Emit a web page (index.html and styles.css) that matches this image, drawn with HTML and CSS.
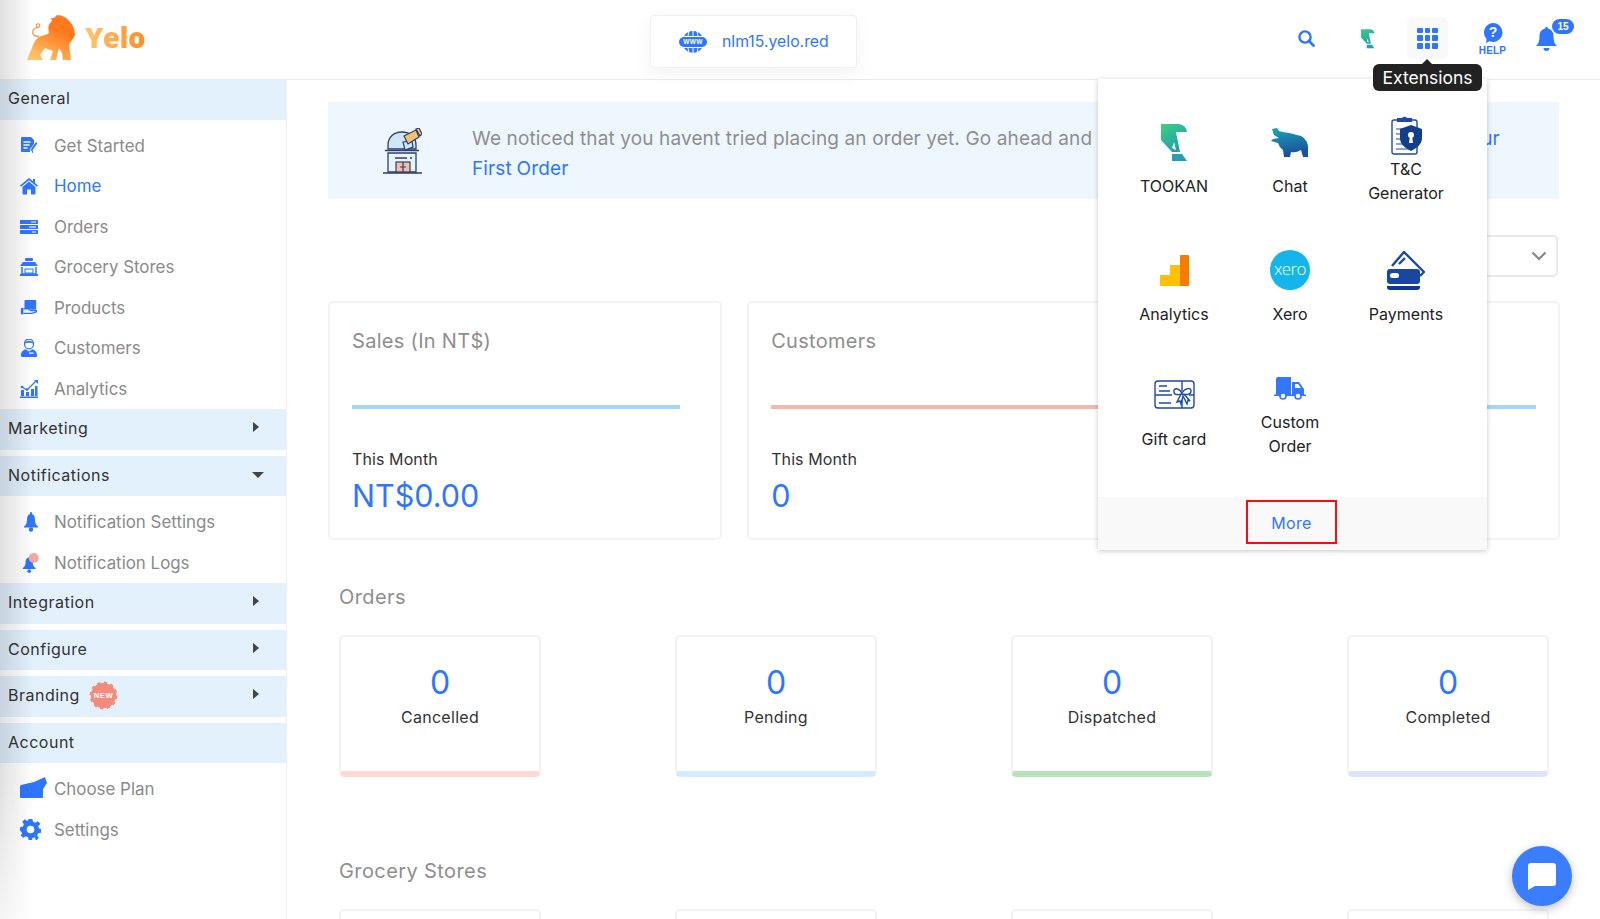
FILE: index.html
```html
<!DOCTYPE html>
<html lang="en">
<head>
<meta charset="utf-8">
<title>Yelo Dashboard</title>
<link rel="stylesheet" href="styles.css">
</head>
<body>
<div class="app">
  <header class="topbar">
    <a class="logo">
      <svg class="lion" viewBox="0 0 48 45" width="48" height="45">
        <defs><linearGradient id="lg" x1="0.7" y1="0" x2="0.2" y2="1"><stop offset="0.3" stop-color="#ff7a1f"/><stop offset="1" stop-color="#ffc66b"/></linearGradient></defs>
        <path fill="url(#lg)" d="M30 0C36 0 40 3 43 7C47 11 48 16 48 20C46 25 43 27 42 30L44 45L36 45L35 38L32 33L29 45L23 45L26 36L18 33L13 40L16 45L0 45C2 40 4 35 6 30C8 26 9 24 12 22C16 20 20 20 22 18C21 14 21 10 23 8L25 6L24 3L27 3Z"/>
        <path fill="none" stroke="#ff9a4a" stroke-width="1.300" d="M12 21C8 22 5 20 6 16C6 13 9 13 12 12"/>
        <circle cx="11" cy="10.500" r="1.800" fill="none" stroke="#ff8a3a" stroke-width="1.100"/>
      </svg>
      <span class="logo-text">Yelo</span>
    </a>
    <div class="url-pill">
      <svg viewBox="0 0 28 22" width="28" height="22">
        <path fill="#2f76ff" d="M14 0a11 11 0 0 0-9 5h18a11 11 0 0 0-9-5zM5 17a11 11 0 0 0 18 0z"/>
        <path stroke="#fff" stroke-width="1" d="M10 0l-1 5M14 0v5M18 0l1 5M9 17l1 5M14 17v5M19 17l-1 5"/>
        <rect x="0" y="6" width="28" height="10" rx="5" fill="#2f76ff"/>
        <text x="14" y="13.400" class="www">WWW</text>
      </svg>
      <span>nlm15.yelo.red</span>
    </div>
    <nav class="actions">
      <svg class="act" viewBox="0 0 17 17" width="17" height="17"><circle cx="7" cy="7" r="5.600" fill="none" stroke="#2f76ff" stroke-width="2.400"/><path d="M11 11l4.500 4.500" stroke="#2f76ff" stroke-width="2.800" stroke-linecap="round"/></svg>
      <svg class="act act-tookan" viewBox="0 0 27 38" width="14" height="21">
        <defs><linearGradient id="tk1" x1="0" y1="0" x2="0.6" y2="1"><stop offset="0" stop-color="#3fcf7f"/><stop offset="1" stop-color="#1f9fb0"/></linearGradient></defs>
        <path fill="url(#tk1)" d="M0 1H18Q25 2 26 9H15L19 29L11 29L0 17Z"/><path fill="#fff" d="M13 19l2 8-4-2z"/><path fill="#2a9db0" d="M11 31H21L26 38H11Z"/>
      </svg>
      <div class="ext-btn">
        <span class="grid-icon"><i></i><i></i><i></i><i></i><i></i><i></i><i></i><i></i><i></i></span>
        <div class="tooltip">Extensions</div>
        <div class="menu">
          <div class="menu-grid">
            <div class="ext">
              <span class="ext-icon"><svg viewBox="0 0 27 38" width="27" height="38">
                <defs><linearGradient id="tk2" x1="0" y1="0" x2="0.6" y2="1"><stop offset="0" stop-color="#3fcf7f"/><stop offset="1" stop-color="#1f9fb0"/></linearGradient></defs>
                <path fill="url(#tk2)" d="M0 1H18Q25 2 26 9H15L19 29L11 29L0 17Z"/><path fill="#fff" d="M13 19l2 8-4-2z"/><path fill="#2a9db0" d="M11 31H21L26 38H11Z"/></svg></span>
              <span>TOOKAN</span>
            </div>
            <div class="ext">
              <span class="ext-icon"><svg viewBox="0 0 38 31" width="38" height="31">
                <defs><linearGradient id="hp" x1="0" y1="0" x2="0.2" y2="1"><stop offset="0" stop-color="#1aa5b8"/><stop offset="1" stop-color="#1a4f9a"/></linearGradient></defs>
                <path fill="url(#hp)" d="M1 2L6 1L8 4L12 5Q20 6 26 8Q35 9 37 19L37 30H32L30 23Q25 26 20 25L19 30H13L12 23Q8 20 7 16L0 14L2 12L8 11L3 8Z"/></svg></span>
              <span>Chat</span>
            </div>
            <div class="ext ext-tall">
              <span class="ext-icon"><svg viewBox="0 0 31 40" width="31" height="40">
                <rect x="1" y="5" width="25" height="34" rx="2" fill="#fff" stroke="#1b4aa8" stroke-width="1.400"/>
                <path fill="#1b4aa8" d="M6 3h5a3 3 0 0 1 5 0h5v4H6z"/>
                <path stroke="#1b4aa8" stroke-width="1.200" d="M5 14h7M5 19h7M5 24h7M5 29h9M5 34h16"/>
                <path fill="#123f8c" d="M20 10l11 4v9c0 6-5 10-11 13c-6-3-11-7-11-13v-9z"/>
                <circle cx="20" cy="20" r="3" fill="#fff"/><path fill="#fff" d="M19 21h2l1 7h-4z"/></svg></span>
              <span>T&amp;C<br>Generator</span>
            </div>
            <div class="ext">
              <span class="ext-icon"><svg viewBox="0 0 29 31" width="29" height="31">
                <path fill="#ffc107" d="M1 20h9V10h10v21H1a1 1 0 0 1-1-1V21a1 1 0 0 1 1-1z"/>
                <path fill="#f57c00" d="M20 1a1 1 0 0 1 1-1h7a1 1 0 0 1 1 1v29a1 1 0 0 1-1 1h-8z"/></svg></span>
              <span>Analytics</span>
            </div>
            <div class="ext">
              <span class="ext-icon"><span class="xero">xero</span></span>
              <span>Xero</span>
            </div>
            <div class="ext">
              <span class="ext-icon"><svg viewBox="0 0 38 40" width="38" height="40">
                <path fill="none" stroke="#1a4a9e" stroke-width="2.400" stroke-linejoin="round" d="M5 16L17 2L37 22L33 26"/>
                <path stroke="#1a4a9e" stroke-width="2.400" d="M12 14l6-6"/>
                <rect x="0" y="19" width="33" height="15" rx="3" fill="#17479e"/>
                <rect x="3" y="23" width="9" height="5" rx="2.500" fill="#fff"/>
                <path fill="#0c35a0" d="M0 36h33v1a3 3 0 0 1-3 3H3a3 3 0 0 1-3-3z"/></svg></span>
              <span>Payments</span>
            </div>
            <div class="ext">
              <span class="ext-icon"><svg viewBox="0 0 41 30" width="41" height="30" fill="none" stroke="#1b4aa8" stroke-width="1.400">
                <rect x="1" y="1" width="39" height="27" rx="3"/>
                <path d="M5 6h8M5 11h11M1 15h17M5 23h12M28 1v10M28 20v8M35 15h5"/>
                <path d="M28 13C24 7 19 8 20 12C20 15 24 15 28 14C32 15 37 15 37 11C37 7 31 8 28 13Z"/>
                <path d="M27 14L23 22L26 21L27 24L29 16L33 24L34 20L36 21L30 14"/></svg></span>
              <span>Gift card</span>
            </div>
            <div class="ext ext-tall">
              <span class="ext-icon"><svg viewBox="0 0 32 23" width="32" height="23">
                <path fill="#3377ff" d="M2 2a2 2 0 0 1 2-2h13v18H2zM18 5h7l5 7v6H18z"/>
                <path fill="#fff" d="M21 7h3l3 4h-6z"/>
                <path fill="#3377ff" d="M0 17.500h32v1.500H0z"/>
                <circle cx="9" cy="19" r="3" fill="#fff" stroke="#3377ff" stroke-width="1.600"/>
                <circle cx="24" cy="19" r="3" fill="#fff" stroke="#3377ff" stroke-width="1.600"/></svg></span>
              <span>Custom<br>Order</span>
            </div>
          </div>
          <div class="menu-foot"><a class="more">More</a></div>
        </div>
      </div>
      <div class="act-help">
        <svg viewBox="0 0 20 20" width="20" height="20"><path fill="#2f76ff" d="M10 0a9.500 9.500 0 1 1-3.600 18.300L3 20l.6-4A9.500 9.500 0 0 1 10 0z"/><text x="10" y="14" class="q">?</text></svg>
        <span>HELP</span>
      </div>
      <div class="act-bell">
        <svg viewBox="0 0 21 24" width="21" height="24"><path fill="#2f76ff" d="M10.500 0c.8 0 1.300.6 1.300 1.400C15.500 2.200 17.500 5 17.500 9c0 5 1 8 3.500 10H0c2.500-2 3.500-5 3.500-10 0-4 2-6.800 5.700-7.600C9.200.6 9.700 0 10.500 0z"/><path fill="#2f76ff" d="M7.500 21h6a3 3 0 0 1-6 0z"/></svg>
        <span class="badge">15</span>
      </div>
    </nav>
  </header>

  <div class="body">
    <aside class="sidebar">
      <div class="sec">General</div>
      <ul class="items">
        <li><svg class="ic" viewBox="0 0 18 18"><path fill="#2f76ff" d="M2 0h9l3 3v4l-4 5v3H2a1 1 0 0 1-1-1V1a1 1 0 0 1 1-1z M2 16h10a1 1 0 0 0 1-1v-2l-1 1v2z"/><path stroke="#fff" stroke-width="1.300" d="M3.500 5h7M3.500 8h6M3.500 11h4"/><path fill="#2f76ff" d="M11 12l5-7 1.500 1.200-5 7-2 1z"/></svg>Get Started</li>
        <li class="active"><svg class="ic" viewBox="0 0 18 18"><path fill="#2f76ff" d="M9 1L0 8.500l1 1.300L9 3.200l8 6.600 1-1.300-3-2.500V2h-2v2.200z"/><path fill="#2f76ff" d="M9 4.500L2.500 10v6.500a1 1 0 0 0 1 1H7v-5h4v5h3.500a1 1 0 0 0 1-1V10z"/></svg>Home</li>
        <li><svg class="ic" viewBox="0 0 18 18"><rect y="2" width="18" height="4" rx=".6" fill="#2f76ff"/><rect y="7" width="18" height="4" rx=".6" fill="#2f76ff"/><rect y="12" width="18" height="4" rx=".6" fill="#2f76ff"/><path stroke="#fff" stroke-width="1" d="M11 4h5M9 9h7M12 14h4"/></svg>Orders</li>
        <li><svg class="ic" viewBox="0 0 18 18"><rect x="5" y="0" width="8" height="3" rx="1" fill="#2f76ff"/><path fill="#2f76ff" d="M3 4h12l3 4H0z"/><path fill="none" stroke="#2f76ff" stroke-width="1.500" d="M2 9v7h14V9"/><rect x="5" y="11" width="8" height="4" fill="none" stroke="#2f76ff"/><rect y="16" width="18" height="2" fill="#2f76ff"/></svg>Grocery Stores</li>
        <li><svg class="ic" viewBox="0 0 20 18"><rect x="5" y="0" width="13" height="11" rx="1" fill="#2f76ff"/><rect x="1" y="9" width="3" height="7" fill="#2f76ff"/><path fill="#fff" d="M4 10h6l4 2h5v1l-5 2H4z"/><path fill="none" stroke="#2f76ff" stroke-width="1.300" d="M4 10h5l3 2h7M4 15h9l6-2"/></svg>Products</li>
        <li><svg class="ic" viewBox="0 0 18 20"><ellipse cx="9" cy="5.500" rx="5" ry="5.500" fill="#fff" stroke="#2f76ff" stroke-width="1.400"/><path fill="#2f76ff" d="M4 5c2-4 8-4 10 0-3-1-7-1-10 0zM0 19c0-5 3-7 5.500-7.500L9 14l3.500-2.500C15 12 18 14 18 19c0 .6-.5 1-1 1H1c-.5 0-1-.4-1-1z"/><rect x="9" y="15" width="5" height="1.400" fill="#fff"/></svg>Customers</li>
        <li><svg class="ic" viewBox="0 0 18 18"><path fill="#2f76ff" d="M0 16.500h18V18H0zM1 10h3v6H1zM6 12h3v4H6zM11 9h3v7h-3zM15 6h2.500v10H15z"/><path stroke="#2f76ff" stroke-width="1.200" fill="none" d="M2 7l5 3 5-5 4-4"/><circle cx="2" cy="7" r="1.300" fill="#2f76ff"/><circle cx="7" cy="9.500" r="1.300" fill="#2f76ff"/><path fill="#2f76ff" d="M14 0h4v4z"/></svg>Analytics</li>
      </ul>
      <div class="sec sec-arrow">Marketing<i class="tri-r"></i></div>
      <div class="sec sec-arrow">Notifications<i class="tri-d"></i></div>
      <ul class="items">
        <li><svg class="ic ic-bell" viewBox="0 0 14 20"><circle cx="7" cy="1.200" r="1.100" fill="#2f76ff"/><path fill="#2f76ff" d="M7 2c3 0 4 2.500 4 6 0 3 1 5 3 6.500v1H0v-1C2 13 3 11 3 8c0-3.500 1-6 4-6z"/><circle cx="7" cy="17.500" r="2.200" fill="#2f76ff"/></svg>Notification Settings</li>
        <li><svg class="ic ic-bell" viewBox="0 0 18 22"><path fill="#2f76ff" d="M7 5c3 0 4 2.500 4 6 0 2 1 4 3 5.500v1H0v-1C2 15 3 13 3 11c0-3.500 1-6 4-6z"/><circle cx="7" cy="20" r="2" fill="#2f76ff"/><circle cx="12" cy="5.500" r="5.500" fill="#f4a99c"/></svg>Notification Logs</li>
      </ul>
      <div class="sec sec-arrow">Integration<i class="tri-r"></i></div>
      <div class="sec sec-arrow">Configure<i class="tri-r"></i></div>
      <div class="sec sec-arrow">Branding
        <svg class="new" viewBox="0 0 30 30" width="29" height="29"><circle cx="15" cy="15" r="13" fill="#f28b7c"/><circle cx="15" cy="15" r="13.500" fill="none" stroke="#f28b7c" stroke-width="1.800" stroke-dasharray="3.530 3.530"/><text x="15" y="18" class="new-t">NEW</text></svg>
        <i class="tri-r"></i></div>
      <div class="sec">Account</div>
      <ul class="items">
        <li><svg class="ic ic-plan" viewBox="0 0 27 21"><path fill="#2f76ff" d="M1 8l13-3L25 0l2 6-4 6v9H1a1 1 0 0 1-1-1V9z"/></svg>Choose Plan</li>
        <li><svg class="ic ic-gear" viewBox="0 0 22 22"><path fill="#2f76ff" fill-rule="evenodd" d="M9 0h4l.6 3 2.400 1 2.600-1.700 2.800 2.800L19 7.700l1 2.300 2 .6v3.800l-3 .6-1 2.400 1.700 2.600-2.800 2.800L15.300 19l-2.300 1-.6 2H9l-.6-3-2.400-1-2.600 1.700-2.800-2.800L2.300 15.300l-1-2.300L0 12.400V8.600l3-.6 1-2.400L2.300 3 5.100.3 7.700 2l.7-.3zM11 7a4 4 0 1 0 0 8 4 4 0 0 0 0-8z"/></svg>Settings</li>
      </ul>
    </aside>

    <main class="main">
      <section class="banner">
        <svg class="scope" viewBox="0 0 39 46" width="39" height="46">
          <path fill="#cfe6f8" stroke="#2c3e6b" stroke-width="1.300" d="M5 21V17C5 9 11 4 19 4c8 0 14 5 14 13v4z"/>
          <path fill="#e8f3fb" stroke="#2c3e6b" stroke-width="1.300" d="M5 25h28v19H5z"/>
          <path stroke="#2c3e6b" stroke-width="1.300" d="M2 22.500h34M0 45h39M12 30h12M27 30h2"/>
          <rect x="13" y="34" width="14" height="10" fill="#f5bda8" stroke="#2c3e6b" stroke-width="1.200"/>
          <path stroke="#2c3e6b" stroke-width="1.200" d="M20 34v10M17 39h6"/>
          <path fill="#cfe6f8" stroke="#2c3e6b" stroke-width="1.200" d="M20 14l9-1 1 6-8 3z"/>
          <path fill="#f2c46f" stroke="#2c3e6b" stroke-width="1.200" d="M21 8L33 2l3 7-11 7z"/>
          <path fill="#f2c46f" stroke="#2c3e6b" stroke-width="1.200" d="M33 1l3-1 3 6-2 2z"/>
        </svg>
        <p class="banner-text">We noticed that you havent tried placing an order yet. Go ahead and <a class="link">place a new order on an app to see how your First Order</a></p>
      </section>

      <div class="filter-row">
        <div class="select"><span>This Month</span><svg viewBox="0 0 16 10" width="16" height="10"><path d="M1.500 1.500L8 8l6.500-6.500" fill="none" stroke="#888" stroke-width="2.200"/></svg></div>
      </div>

      <section class="stats">
        <article class="stat">
          <h3>Sales (In NT$)</h3><div class="bar bar-blue"></div>
          <div class="stat-lbl">This Month</div><div class="stat-val">NT$0.00</div>
        </article>
        <article class="stat">
          <h3>Customers</h3><div class="bar bar-red"></div>
          <div class="stat-lbl">This Month</div><div class="stat-val">0</div>
        </article>
        <article class="stat stat-wide">
          <h3>Revenue</h3><div class="bar bar-blue"></div>
          <div class="stat-lbl">This Month</div><div class="stat-val">0</div>
        </article>
      </section>

      <section class="group">
        <h2>Orders</h2>
        <div class="tiles">
          <div class="tile t-red"><b>0</b><span>Cancelled</span></div>
          <div class="tile t-blue"><b>0</b><span>Pending</span></div>
          <div class="tile t-green"><b>0</b><span>Dispatched</span></div>
          <div class="tile t-violet"><b>0</b><span>Completed</span></div>
        </div>
      </section>
      <section class="group group-next">
        <h2>Grocery Stores</h2>
        <div class="tiles">
          <div class="tile t-red"></div>
          <div class="tile t-blue"></div>
          <div class="tile t-green"></div>
          <div class="tile t-violet"></div>
        </div>
      </section>
    </main>
  </div>

  <button class="fab" aria-label="Chat">
    <svg viewBox="0 0 28 27" width="28" height="27"><path fill="#fff" d="M3 0h22a3 3 0 0 1 3 3v17a3 3 0 0 1-3 3H7l-7 4V3a3 3 0 0 1 3-3z"/></svg>
  </button>
</div>
</body>
</html>
```

FILE: styles.css
```css
* { box-sizing: border-box; }
html, body { margin: 0; height: 100%; }
body { font-family: "Inter", "Liberation Sans", sans-serif; color: #333; background: #fff; overflow: hidden; }
.app { position: relative; width: 1600px; height: 919px; overflow: hidden; display: flex; flex-direction: column; }
.app::before { content: ""; position: absolute; left: 0; top: 0; width: 34px; height: 919px; z-index: 5; pointer-events: none; background: linear-gradient(90deg, rgba(0,0,0,.12), rgba(0,0,0,0)); -webkit-mask-image: linear-gradient(180deg, #000 85%, rgba(0,0,0,.35) 100%); mask-image: linear-gradient(180deg, #000 85%, rgba(0,0,0,.35) 100%); }

/* top bar */
.topbar { height: 80px; margin-bottom: -1px; flex: none; display: flex; align-items: center; border-bottom: 1px solid #ebebeb; padding: 0 43px 0 27px; position: relative; z-index: 3; background: #fff; }
.logo { display: flex; align-items: center; gap: 10px; margin-top: -4px; width: 623px; flex: none; }
.lion { flex: none; }
.logo-text { font: 800 27.500px/1 "Open Sans", sans-serif; letter-spacing: -.4px; background: linear-gradient(90deg, #ffc76c, #ff8d2b); -webkit-background-clip: text; background-clip: text; color: transparent; }
.url-pill { width: 207px; height: 53px; margin-top: 4px; display: flex; align-items: center; gap: 15px; padding-left: 28px; background: #fff; border: 1px solid #f1f1f1; border-radius: 4px; box-shadow: 0 6px 20px rgba(0,0,0,.05); color: #2f76ff; font-size: 15.800px; }
.www { font: 700 6.500px "Liberation Sans", sans-serif; fill: #fff; text-anchor: middle; letter-spacing: .3px; }
.actions { margin-left: auto; margin-top: -3px; display: flex; align-items: center; }
.act { display: block; flex: none; }
.act-tookan { margin-left: 46px; margin-top: 1px; }
.ext-btn { position: relative; width: 41px; height: 42px; margin-left: 32px; background: #f9f9f9; border-radius: 6px; display: flex; align-items: center; justify-content: center; }
.grid-icon { width: 21px; height: 21px; display: grid; grid-template-columns: repeat(3, 1fr); gap: 2px; }
.grid-icon i { background: #2f76ff; border-radius: 1px; }
.tooltip { position: absolute; left: -34px; top: 47px; width: 109px; height: 27px; z-index: 4; background: #222; color: #fff; border-radius: 6px; font-size: 17.500px; line-height: 27px; text-align: center; }
.tooltip::before { content: ""; position: absolute; left: 49px; top: -5px; border: 5px solid transparent; border-top: 0; border-bottom-color: #222; }
.menu { position: absolute; left: -309px; top: 62px; width: 389px; height: 471px; background: #fff; box-shadow: 0 1px 5px rgba(0,0,0,.22); display: flex; flex-direction: column; z-index: 3; }
.menu-grid { flex: 1; padding-top: 17px; display: grid; grid-template-columns: repeat(3, 116px); grid-template-rows: 128px 128px 122px; justify-content: start; padding-left: 18px; }
.ext { display: flex; flex-direction: column; align-items: center; justify-content: center; gap: 12px; color: #222; font-size: 16px; line-height: 24px; text-align: center; }
.ext-tall { gap: 2px; }
.ext-icon { height: 40px; display: flex; align-items: center; justify-content: center; }
.xero { width: 40px; height: 40px; border-radius: 50%; background: #13b5ea; color: #fff; font: 300 17px/38px "Open Sans", sans-serif; letter-spacing: -.6px; text-align: center; display: block; }
.menu-foot { height: 53px; background: #f9f9f9; display: flex; justify-content: center; padding-top: 3px; }
.more { width: 91px; height: 44px; margin-right: 2px; border: 2px solid #f40f0f; color: #2f76ff; font-size: 16px; line-height: 42px; text-align: center; letter-spacing: .3px; }
.act-help { position: relative; width: 27px; margin-left: 31px; display: flex; flex-direction: column; align-items: center; margin-top: 3px; }
.q { font: 700 14px "Liberation Sans", sans-serif; fill: #fff; text-anchor: middle; }
.act-help span { font: 700 10px/13px "Liberation Sans", sans-serif; color: #2f76ff; letter-spacing: .2px; margin-top: 1px; }
.act-bell { position: relative; margin-left: 30px; margin-top: 1px; height: 24px; }
.act-bell svg { display: block; }
.badge { position: absolute; left: 16px; top: -8px; width: 22px; height: 15px; border-radius: 8px; background: #2f76ff; color: #fff; font: 700 10px/15px "Liberation Sans", sans-serif; text-align: center; }

/* layout */
.body { flex: 1; display: flex; min-height: 0; }
.sidebar { width: 287px; flex: none; border-right: 1px solid #efefef; background: #fff; }
.sec { height: 40.500px; background: #e3f1fd; margin-bottom: 6px; display: flex; align-items: center; padding: 0 0 2px 8px; position: relative; font-size: 16px; color: #333; letter-spacing: .5px; }
.tri-r { position: absolute; right: 27px; top: 13px; border-style: solid; border-width: 5.500px 0 5.500px 6px; border-color: transparent transparent transparent #444; }
.tri-d { position: absolute; right: 22px; top: 16px; border-style: solid; border-width: 6px 6px 0; border-color: #444 transparent transparent; }
.new { margin-left: 9px; }
.new-t { font: 700 8px "Liberation Sans", sans-serif; fill: #fff; text-anchor: middle; }
.items { list-style: none; margin: 0; padding: 0; }
.items li { height: 40.500px; display: flex; align-items: center; padding-left: 20px; font-size: 16.900px; color: #8a8a8a; position: relative; }
.items li.active { color: #2f76ff; }
.ic { width: 18px; height: 18px; flex: none; margin-right: 16px; }
.ic-bell { margin-left: 2px; margin-right: 14px; height: 20px; }
.ic-plan { width: 27px; height: 21px; margin-right: 7px; margin-bottom: 3px; }
.ic-gear { width: 21px; height: 21px; margin-right: 13px; }

/* main */
.main { flex: 1; min-width: 0; padding: 23px 40px 0 41px; background: #fff; }
.banner { height: 97px; margin-right: 1px; background: #eef7fe; display: flex; align-items: center; padding-left: 55px; gap: 50px; }
.scope { flex: none; }
.banner-text { margin: 0; width: 1045px; font-size: 19px; letter-spacing: .13px; line-height: 30px; color: #8e8e8e; position: relative; top: 3px; }
.link { color: #2f76ff; word-spacing: -.8px; }
.filter-row { display: flex; justify-content: flex-end; margin-top: 36px; padding-right: 2px; }
.select { width: 260px; height: 42px; border: 2px solid #e8e8e8; border-radius: 5px; display: flex; align-items: center; justify-content: flex-end; padding-right: 9px; gap: 44px; color: #999; font-size: 15px; }
.stats { margin-top: 24px; display: grid; grid-template-columns: repeat(3, 1fr); gap: 25.500px; }
.stat { height: 239px; border: 2px solid #f3f3f3; border-radius: 5px; padding: 24px 40px 0 22px; background: #fff; }
.stat-wide { padding-right: 22px; }
.stat h3 { margin: 0; font-size: 20px; line-height: 28px; font-weight: 400; color: #8e8e8e; letter-spacing: .3px; }
.bar { height: 4px; margin-top: 50px; }
.bar-blue { background: #a6d5fa; }
.bar-red { background: #f5b7ab; }
.stat-lbl { margin-top: 40px; font-size: 16px; line-height: 20px; color: #333; letter-spacing: .1px; }
.stat-val { margin-top: 7px; font-size: 30.500px; line-height: 40px; color: #2f76ff; }
.group { padding: 0 11px; margin-top: 43px; }
.group-next { margin-top: 80px; }
.group h2 { margin: 0; font-size: 20px; line-height: 28px; font-weight: 400; color: #8e8e8e; letter-spacing: .4px; }
.tiles { margin-top: 24px; display: flex; justify-content: space-between; }
.tile { width: 202px; height: 142px; border: 2px solid #f3f3f3; border-bottom-width: 6px; border-radius: 5px; padding-top: 26px; display: flex; flex-direction: column; align-items: center; background: #fff; }
.tile b { font-size: 32px; line-height: 40px; font-weight: 400; color: #2f76ff; }
.tile span { margin-top: 2px; font-size: 16px; line-height: 24px; color: #333; letter-spacing: .3px; }
.t-red { border-bottom-color: #ffd9d3; }
.t-blue { border-bottom-color: #d3ecff; }
.t-green { border-bottom-color: #b5e4b8; }
.t-violet { border-bottom-color: #dde3fb; }

.fab { position: absolute; left: 1512px; top: 846px; width: 60px; height: 60px; border: 0; padding: 0; border-radius: 50%; background: #3a7dff; box-shadow: 0 3px 10px rgba(0,0,0,.25); display: flex; align-items: center; justify-content: center; z-index: 6; }
```
